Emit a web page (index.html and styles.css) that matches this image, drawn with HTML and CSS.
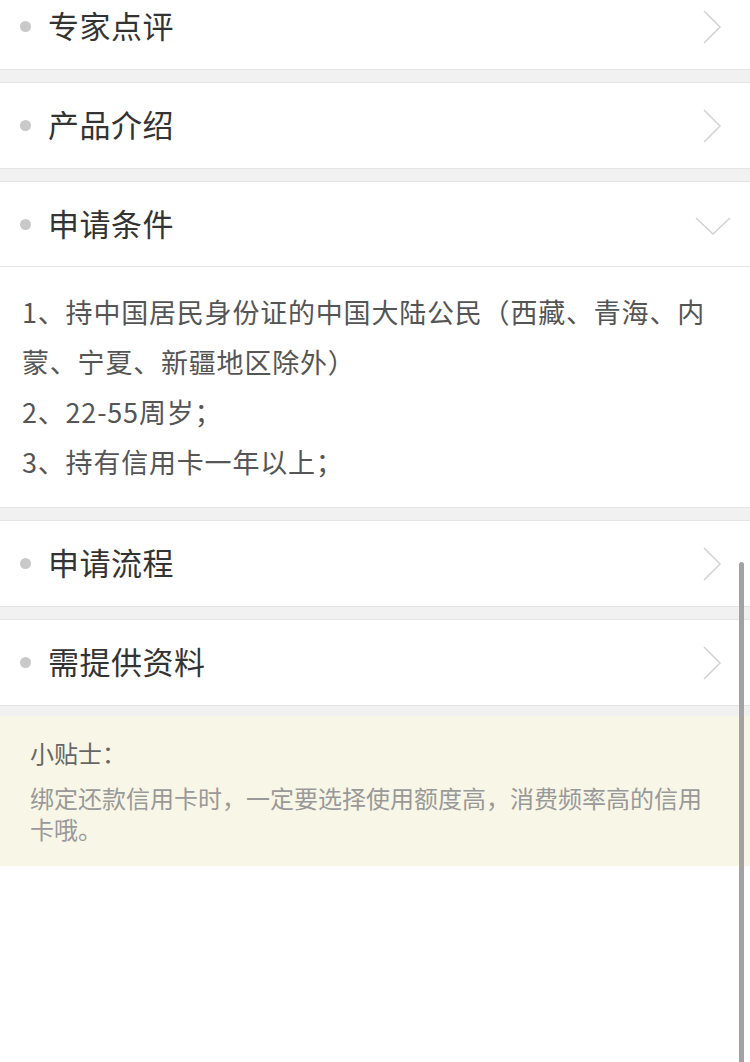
FILE: index.html
```html
<!DOCTYPE html>
<html lang="zh-CN">
<head>
    <meta charset="utf-8">
    <title>产品详情</title>
    <link rel="stylesheet" href="styles.css">
</head>
<body>
    <div id="Views">

        <div class="item">
            <div class="head"><span class="dot"></span><span class="title">专家点评</span>
                <svg class="arrow" width="20" height="36" viewBox="0 0 20 36"><polyline points="2,2 18,18 2,34" /></svg></div>
        </div>

        <div class="item">
            <div class="head"><span class="dot"></span><span class="title">产品介绍</span>
                <svg class="arrow" width="20" height="36" viewBox="0 0 20 36"><polyline points="2,2 18,18 2,34" /></svg></div>
        </div>

        <div class="item open">
            <div class="head"><span class="dot"></span><span class="title">申请条件</span>
                <svg class="arrow down" width="38" height="20" viewBox="0 0 38 20"><polyline points="2,2 19,18 36,2" /></svg></div>
            <div class="body">
                <p>1、持中国居民身份证的中国大陆公民（西藏、青海、内蒙、宁夏、新疆地区除外）</p>
                <p>2、22-55周岁；</p>
                <p>3、持有信用卡一年以上；</p>
            </div>
        </div>

        <div class="item">
            <div class="head"><span class="dot"></span><span class="title">申请流程</span>
                <svg class="arrow" width="20" height="36" viewBox="0 0 20 36"><polyline points="2,2 18,18 2,34" /></svg></div>
        </div>

        <div class="item">
            <div class="head"><span class="dot"></span><span class="title">需提供资料</span>
                <svg class="arrow" width="20" height="36" viewBox="0 0 20 36"><polyline points="2,2 18,18 2,34" /></svg></div>
        </div>

    </div>

    <div class="tips">
        <div class="tips-title">小贴士：</div>
        <div class="tips-text">绑定还款信用卡时，一定要选择使用额度高，消费频率高的信用卡哦。</div>
    </div>

    <div class="scrollbar"></div>
</body>
</html>
```

FILE: styles.css
```css
body { margin: 0; background-color: #fff; font-family: "Noto Sans CJK SC", "Noto Sans", sans-serif; overflow: hidden; }
div#Views { margin-top: -17px; background-color: #f1f1f1; padding-bottom: 10px; }
.item { background-color: #fff; border-top: solid 1px #e4e4e4; border-bottom: solid 1px #e4e4e4; margin-bottom: 12px; }
.item:last-child { margin-bottom: 0; }
.head { height: 85px; box-sizing: border-box; display: flex; align-items: center; padding: 0 28px 4px 20px; }
.dot { width: 11px; height: 11px; border-radius: 50%; background-color: #c9c9c9; margin-right: 17px; margin-top: 4px; }
.title { flex: 1; font-size: 31px; color: #333; letter-spacing: 0.5px; }
.arrow { display: block; fill: none; stroke: #d2d2d2; stroke-width: 1.5; margin-top: 4px; }
.arrow.down { margin-right: -10px; margin-top: 8px; }
.open .head { border-bottom: solid 1px #e4e4e4; }
.body { padding: 20px 20px 20px 22px; font-size: 27px; line-height: 50px; letter-spacing: 0.8px; color: #555; }
.body p { margin: 0; }
.tips { background-color: #f8f6e6; padding: 21px 30px 22px; }
.tips-title { font-size: 24px; line-height: 32px; color: #666; margin-bottom: 13px; }
.tips-text { font-size: 24px; line-height: 31px; color: #999; }
.scrollbar { position: fixed; right: 6px; top: 562px; bottom: 0; width: 5px; border-radius: 3px 3px 0 0; background-color: #a2a2a2; }
```
